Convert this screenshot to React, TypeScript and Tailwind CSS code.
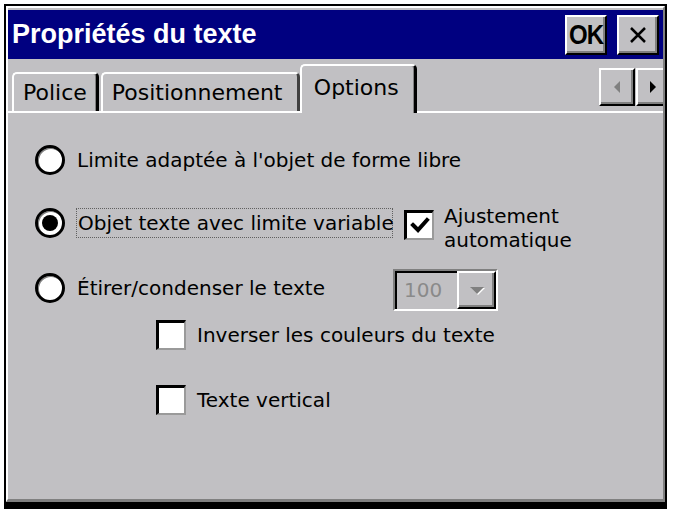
import React from "react";

function Radio({ checked }: { checked?: boolean }) {
  return (
    <div className="w-[30px] h-[30px] shrink-0 rounded-full border-[3px] border-black bg-white flex items-center justify-center shadow-[inset_1px_1px_0_#808080]">
      {checked && <div className="w-[16px] h-[16px] rounded-full bg-black" />}
    </div>
  );
}

function Check({ checked }: { checked?: boolean }) {
  return (
    <div className="w-[30px] h-[30px] shrink-0 bg-white border-t-[3px] border-l-[3px] border-t-black border-l-black border-b-2 border-r-2 border-b-[#9a9a9a] border-r-[#9a9a9a] flex items-center justify-center">
      {checked && (
        <svg width="20" height="18" viewBox="0 0 20 18">
          <polyline points="3,8 8,13 17,3" fill="none" stroke="#000" strokeWidth="4" strokeLinecap="square" />
        </svg>
      )}
    </div>
  );
}

const raised =
  "bg-[#c1c0c3] border-t-2 border-l-2 border-t-white border-l-white border-b-2 border-r-2 border-b-black border-r-black shadow-[inset_-2px_-2px_0_#808080]";

export default function App() {
  return (
    <div className="w-[673px] h-[509px] bg-white overflow-hidden pt-[4px] pl-[4px] font-['DejaVu_Sans',sans-serif] text-black">
      <div className="w-[663px] h-[505px] border-black border-t-2 border-l-2 border-r-2 border-b-[7px] flex flex-col">
        <div className="flex-1 flex flex-col overflow-hidden border-t-2 border-l-2 border-t-white border-l-white border-r-2 border-r-[#808080] border-b-[3px] border-b-[#808080] bg-[#c1c0c3] pt-[2px]">
          {/* Title bar */}
          <div className="h-[49px] shrink-0 bg-[#000080] flex items-center pl-[4px] pr-[4px]">
            <span className="text-white font-bold text-[27px] leading-none font-['Liberation_Sans',sans-serif]">
              Propriétés du texte
            </span>
            <div className="ml-auto flex gap-[10px]">
              <div className={`${raised} w-[42px] h-[40px] flex items-center justify-center`}>
                <span className="font-bold text-[24px] leading-none font-['Liberation_Sans',sans-serif] tracking-[-1px] scale-y-[1.15]">
                  OK
                </span>
              </div>
              <div className={`${raised} w-[42px] h-[40px] flex items-center justify-center`}>
                <svg width="18" height="18" viewBox="0 0 18 18">
                  <path d="M2 2 L16 16 M16 2 L2 16" stroke="#000" strokeWidth="2.5" />
                </svg>
              </div>
            </div>
          </div>

          {/* Tab strip */}
          <div className="h-[54px] shrink-0 flex items-end pl-[4px] border-b-2 border-b-white relative">
            <div className="h-[39px] px-[9px] flex items-center border-t-2 border-l-2 border-t-white border-l-white border-r-[3px] border-r-black rounded-tl-[5px] rounded-tr-[5px] shadow-[inset_-1px_0_0_#808080] text-[22px] leading-none">
              Police
            </div>
            <div className="ml-[2px] h-[39px] w-[199px] px-[9px] flex items-center border-t-2 border-l-2 border-t-white border-l-white border-r-[3px] border-r-[#404040] rounded-tl-[5px] rounded-tr-[5px] text-[22px] leading-none">
              Positionnement
            </div>
            <div className="relative z-10 -mb-[2px] h-[49px] w-[117px] pl-[12px] pb-[4px] flex items-center bg-[#c1c0c3] border-t-2 border-l-2 border-t-white border-l-white border-r-[3px] border-r-black rounded-tl-[5px] rounded-tr-[5px] shadow-[inset_-1px_0_0_#808080] text-[22px] leading-none">
              Options
            </div>
            <div className="ml-auto self-start mt-[9px] flex">
              <div className={`${raised} w-[36px] h-[38px] flex items-center justify-center`}>
                <svg width="8" height="12" viewBox="0 0 8 12">
                  <polygon points="7,0 7,12 1,6" fill="#808080" />
                </svg>
              </div>
              <div className={`${raised} ml-[1px] w-[33px] h-[38px] flex items-center justify-center -mr-[6px]`}>
                <svg width="8" height="12" viewBox="0 0 8 12">
                  <polygon points="1,0 1,12 7,6" fill="#000" />
                </svg>
              </div>
            </div>
          </div>

          {/* Client area */}
          <div className="flex-1 flex flex-col text-[20px] leading-[24px]">
            <div className="mt-[32px] h-[30px] flex items-center pl-[27px]">
              <Radio />
              <span className="ml-[12px] whitespace-nowrap">Limite adaptée à l'objet de forme libre</span>
            </div>

            <div className="mt-[33px] h-[30px] flex items-start pl-[27px]">
              <Radio checked />
              <div className="ml-[11px] h-[30px] w-[317px] px-[1px] flex items-center border border-dotted border-[#606060] whitespace-nowrap">
                Objet texte avec limite variable
              </div>
              <div className="ml-[11px] mt-[2px]">
                <Check checked />
              </div>
              <div className="ml-[10px] -mt-[4px] whitespace-nowrap">
                Ajustement
                <br />
                automatique
              </div>
            </div>

            <div className="mt-[35px] h-[30px] flex items-center pl-[27px]">
              <Radio />
              <span className="ml-[12px] w-[316px] whitespace-nowrap">Étirer/condenser le texte</span>
              <div className="mt-[4px] w-[105px] h-[42px] shrink-0 flex border-t-2 border-l-2 border-t-[#808080] border-l-[#808080] border-b-2 border-r-2 border-b-white border-r-white shadow-[inset_2px_2px_0_#000]">
                <div className="flex-1 flex items-center pl-[9px] text-[#8a8a8a]">100</div>
                <div className={`${raised} w-[39px] h-full flex items-center justify-center`}>
                  <svg width="16" height="10" viewBox="0 0 16 10">
                    <polygon points="1,2 15,2 8,9" fill="#ffffff" transform="translate(1,1)" />
                    <polygon points="1,2 15,2 8,9" fill="#808080" />
                  </svg>
                </div>
              </div>
            </div>

            <div className="mt-[17px] h-[30px] flex items-center pl-[148px]">
              <Check />
              <span className="ml-[11px] whitespace-nowrap">Inverser les couleurs du texte</span>
            </div>

            <div className="mt-[35px] h-[30px] flex items-center pl-[148px]">
              <Check />
              <span className="ml-[11px] whitespace-nowrap">Texte vertical</span>
            </div>
          </div>
        </div>
      </div>
    </div>
  );
}
